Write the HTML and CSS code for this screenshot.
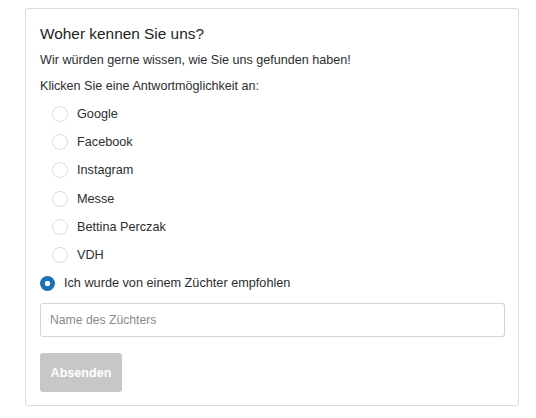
FILE: index.html
```html
<!DOCTYPE html>
<html lang="de">
<head>
<meta charset="utf-8">
<link rel="stylesheet" href="styles.css">
</head>
<body>
<form class="card">
  <h2 class="title">Woher kennen Sie uns?</h2>
  <p class="text">Wir würden gerne wissen, wie Sie uns gefunden haben!</p>
  <p class="text">Klicken Sie eine Antwortmöglichkeit an:</p>
  <ul class="options">
    <li class="option"><span class="radio"></span><span>Google</span></li>
    <li class="option"><span class="radio"></span><span>Facebook</span></li>
    <li class="option"><span class="radio"></span><span>Instagram</span></li>
    <li class="option"><span class="radio"></span><span>Messe</span></li>
    <li class="option"><span class="radio"></span><span>Bettina Perczak</span></li>
    <li class="option"><span class="radio"></span><span>VDH</span></li>
    <li class="option selected"><span class="radio checked"></span><span>Ich wurde von einem Züchter empfohlen</span></li>
  </ul>
  <input class="field" type="text" placeholder="Name des Züchters">
  <button class="submit" type="button">Absenden</button>
</form>
</body>
</html>
```
FILE: styles.css
```css
html, body {
  margin: 0;
  padding: 0;
  background: #fff;
}
body {
  padding: 8px 0 0 25px;
  font-family: "Liberation Sans", Arial, sans-serif;
  color: #2e2e2e;
}
.card {
  width: 494px;
  height: 398px;
  box-sizing: border-box;
  border: 1px solid #dcdcdc;
  border-radius: 3px;
  padding: 15px 14px 0 14px;
  display: flex;
  flex-direction: column;
}
.title {
  margin: 0;
  font-size: 15.4px;
  font-weight: normal;
  line-height: 20px;
  color: #1e1e1e;
}
.text {
  margin: 6px 0 0 0;
  font-size: 12.6px;
  line-height: 20px;
}
.text + .text {
  margin-top: 6px;
}
.options {
  list-style: none;
  margin: 8px 0 0 0;
  padding: 0;
  display: flex;
  flex-direction: column;
  gap: 8.2px;
}
.option {
  display: flex;
  align-items: center;
  gap: 9px;
  height: 20px;
  padding-left: 12px;
  font-size: 12.7px;
}
.option.selected {
  padding-left: 0;
  gap: 9px;
}
.radio {
  width: 16px;
  height: 16px;
  box-sizing: border-box;
  border: 1px solid #dcdcdc;
  border-radius: 50%;
  background: #fff;
  flex: none;
}
.radio.checked {
  width: 15px;
  height: 15px;
  border: none;
  background: radial-gradient(circle, #fff 0 2.5px, #1f6fb5 3px);
}
.field {
  margin-top: 10px;
  width: 465px;
  height: 34px;
  box-sizing: border-box;
  border: 1px solid #d4d4d4;
  border-radius: 3px;
  padding: 0 9px;
  font-family: "Liberation Sans", Arial, sans-serif;
  font-size: 12.2px;
  color: #333;
}
.field::placeholder {
  color: #8a8a8a;
}
.submit {
  margin-top: 16px;
  align-self: flex-start;
  width: 82px;
  height: 39px;
  border: none;
  border-radius: 3px;
  background: #c7c7c7;
  color: #fff;
  font-family: "Liberation Sans", Arial, sans-serif;
  font-weight: bold;
  font-size: 12.6px;
  padding: 0;
}
```
